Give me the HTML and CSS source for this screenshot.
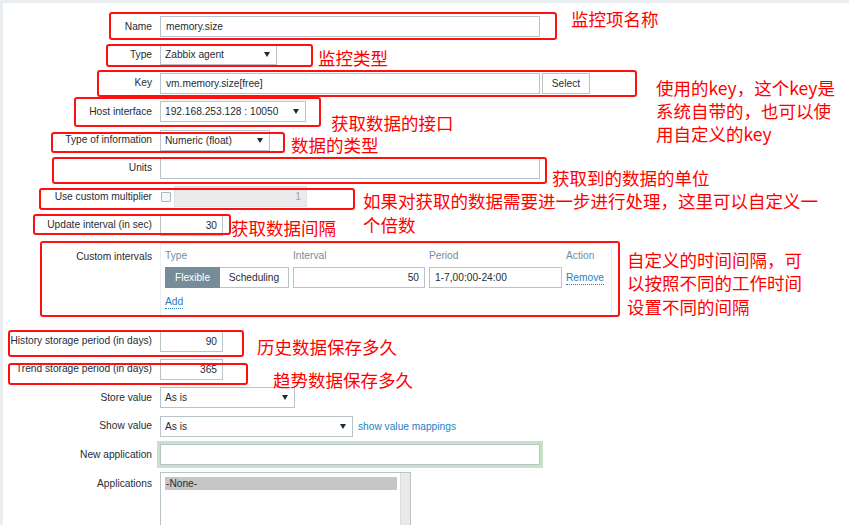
FILE: index.html
```html
<!DOCTYPE html>
<html lang="zh">
<head>
<meta charset="utf-8">
<title>Item</title>
<link rel="stylesheet" href="styles.css">
</head>
<body>
<div class="page">
  <div class="form">
    <div class="row">
      <div class="lbl">Name</div>
      <div class="ctl"><span class="field w380">memory.size</span></div>
    </div>
    <div class="row">
      <div class="lbl">Type</div>
      <div class="ctl"><span class="field select w117">Zabbix agent<i class="arrow"></i></span></div>
    </div>
    <div class="row">
      <div class="lbl">Key</div>
      <div class="ctl"><span class="field w380">vm.memory.size[free]</span><span class="btn">Select</span></div>
    </div>
    <div class="row">
      <div class="lbl">Host interface</div>
      <div class="ctl"><span class="field select w146">192.168.253.128 : 10050<i class="arrow"></i></span></div>
    </div>
    <div class="row">
      <div class="lbl">Type of information</div>
      <div class="ctl"><span class="field select w110">Numeric (float)<i class="arrow"></i></span></div>
    </div>
    <div class="row">
      <div class="lbl">Units</div>
      <div class="ctl"><span class="field w380"></span></div>
    </div>
    <div class="row">
      <div class="lbl">Use custom multiplier</div>
      <div class="ctl"><span class="check"></span><span class="field disabled num w133">1</span></div>
    </div>
    <div class="row">
      <div class="lbl">Update interval (in sec)</div>
      <div class="ctl"><span class="field num w63">30</span></div>
    </div>
    <div class="row row-tall">
      <div class="lbl lbl-top">Custom intervals</div>
      <div class="ctl">
        <div class="intervals">
          <div class="ih">Type</div>
          <div class="ih">Interval</div>
          <div class="ih">Period</div>
          <div class="ih">Action</div>
          <div class="seg"><span class="seg-on">Flexible</span><span class="seg-off">Scheduling</span></div>
          <span class="field num">50</span>
          <span class="field">1-7,00:00-24:00</span>
          <span class="act"><span class="link">Remove</span></span>
          <div class="add"><span class="link">Add</span></div>
        </div>
      </div>
    </div>
    <div class="row">
      <div class="lbl">History storage period (in days)</div>
      <div class="ctl"><span class="field num w63">90</span></div>
    </div>
    <div class="row">
      <div class="lbl">Trend storage period (in days)</div>
      <div class="ctl"><span class="field num w63">365</span></div>
    </div>
    <div class="row">
      <div class="lbl">Store value</div>
      <div class="ctl"><span class="field select w135">As is<i class="arrow"></i></span></div>
    </div>
    <div class="row">
      <div class="lbl">Show value</div>
      <div class="ctl"><span class="field select w193">As is<i class="arrow"></i></span><span class="link plain">show value mappings</span></div>
    </div>
    <div class="row">
      <div class="lbl">New application</div>
      <div class="ctl"><span class="field focus w380"></span></div>
    </div>
    <div class="row row-list">
      <div class="lbl lbl-top2">Applications</div>
      <div class="ctl">
        <div class="listbox">
          <div class="opts"><div class="opt-sel">-None-</div></div>
          <div class="track"></div>
        </div>
      </div>
    </div>
  </div>
</div>

<div class="overlay">
  <div class="box b1"></div>
  <div class="box b2"></div>
  <div class="box b3"></div>
  <div class="box b4"></div>
  <div class="box b5"></div>
  <div class="box b6"></div>
  <div class="box b7"></div>
  <div class="box b8"></div>
  <div class="box b9"></div>
  <div class="box b10"></div>
  <div class="box b11"></div>

  <div class="note n1">监控项名称</div>
  <div class="note n2">监控类型</div>
  <div class="note n3">使用的key，这个key是<br>系统自带的，也可以使<br>用自定义的key</div>
  <div class="note n4">获取数据的接口</div>
  <div class="note n5">数据的类型</div>
  <div class="note n6">获取到的数据的单位</div>
  <div class="note n7">如果对获取的数据需要进一步进行处理，这里可以自定义一<br>个倍数</div>
  <div class="note n8">获取数据间隔</div>
  <div class="note n9">自定义的时间间隔，可<br>以按照不同的工作时间<br>设置不同的间隔</div>
  <div class="note n10">历史数据保存多久</div>
  <div class="note n11">趋势数据保存多久</div>
</div>
</body>
</html>
```

FILE: styles.css
```css
html, body {
  margin: 0;
  padding: 0;
  height: 100%;
  overflow: hidden;
}
body {
  background: #ebeef0;
  font-family: "Liberation Sans", Arial, sans-serif;
  font-size: 10.2px;
  color: #1f2c33;
  position: relative;
}
.page {
  margin: 3px 0 0 3px;
  background: #ffffff;
  height: calc(100% - 3px);
  overflow: hidden;
}
.form {
  padding-top: 13px;
  display: flex;
  flex-direction: column;
  gap: 7.4px;
}
.row {
  display: flex;
  align-items: center;
  height: 21px;
  gap: 8px;
}
.row-tall { height: 80px; align-items: flex-start; }
.row-list { height: 48px; align-items: flex-start; }
.lbl {
  width: 149px;
  flex: none;
  text-align: right;
  line-height: 16px;
  white-space: nowrap;
}
.lbl-top { padding-top: 6px; }
.lbl-top2 { padding-top: 4px; }
.ctl {
  display: flex;
  align-items: center;
  height: 100%;
}
.row-tall .ctl,
.row-list .ctl { align-items: flex-start; }
.field {
  box-sizing: border-box;
  height: 21px;
  border: 1px solid #b8c4ca;
  background: #fff;
  padding: 0 5px;
  line-height: 19px;
  white-space: nowrap;
  position: relative;
  display: block;
}
.num { text-align: right; }
.w380 { width: 380px; }
.w117 { width: 117px; }
.w146 { width: 146px; }
.w110 { width: 110px; }
.w133 { width: 133px; }
.w63 { width: 63px; }
.w135 { width: 135px; }
.w193 { width: 193px; }
.select { padding-left: 4px; }
.arrow {
  position: absolute;
  right: 6px;
  top: 7px;
  width: 0;
  height: 0;
  border-left: 3.5px solid transparent;
  border-right: 3.5px solid transparent;
  border-top: 5px solid #1f2c33;
}
.btn {
  box-sizing: border-box;
  margin-left: 2px;
  width: 48px;
  height: 21px;
  border: 1px solid #b8c4ca;
  background: #fff;
  line-height: 19px;
  text-align: center;
}
.check {
  box-sizing: border-box;
  width: 10px;
  height: 10px;
  border: 1px solid #aab7be;
  border-radius: 1px;
  background: #f4f6f7;
  margin: 0 3px 0 1px;
}
.disabled {
  background: #ebebeb;
  border-color: #dfe3e5;
  color: #9aa6ac;
}
.intervals {
  box-sizing: border-box;
  width: 452px;
  height: 75px;
  border: 1px solid #ebeef0;
  padding: 4px 4px 0 4px;
  display: grid;
  grid-template-columns: 124px 132px 133px auto;
  grid-template-rows: 16px 21px 16px;
  column-gap: 4px;
  row-gap: 3px;
  align-items: center;
  align-content: start;
}
.ih {
  color: #768d99;
  line-height: 16px;
}
.seg {
  display: flex;
  height: 21px;
}
.seg span {
  box-sizing: border-box;
  height: 21px;
  line-height: 19px;
  text-align: center;
  border: 1px solid #b8c4ca;
}
.seg-on {
  width: 55px;
  background: #768d99;
  border-color: #768d99 !important;
  color: #fff;
}
.seg-off {
  width: 69px;
  background: #fff;
  border-left: none !important;
}
.act { line-height: 16px; }
.link {
  color: #1f7fc4;
  border-bottom: 1px dotted #1f7fc4;
  line-height: 13px;
  display: inline-block;
}
.plain {
  border-bottom: none;
  margin-left: 5px;
}
.add {
  grid-column: 1 / 2;
  padding-top: 6px;
  line-height: 16px;
}
.focus {
  box-shadow: 0 0 0 3px #c7e3c7;
}
.listbox {
  box-sizing: border-box;
  width: 251px;
  height: 100px;
  border: 1px solid #b8c4ca;
  display: flex;
}
.opts {
  flex: 1;
  padding: 4px 3px 0 4px;
}
.opt-sel {
  background: #c6c6c6;
  line-height: 13px;
  padding-left: 1px;
}
.track {
  width: 9px;
  background: #e9e9e9;
  border-left: 1px solid #dcdcdc;
}

/* annotation overlay */
.overlay {
  position: absolute;
  left: 0;
  top: 0;
  width: 100%;
  height: 100%;
  pointer-events: none;
}
.box {
  position: absolute;
  box-sizing: border-box;
  border: 2px solid #ff1010;
  border-radius: 3px;
}
.b1 { left: 109px; top: 12px; width: 448px; height: 28px; }
.b2 { left: 106px; top: 44px; width: 207px; height: 23px; }
.b3 { left: 97px; top: 70px; width: 540px; height: 27px; }
.b4 { left: 74px; top: 97px; width: 247px; height: 30px; }
.b5 { left: 51px; top: 132px; width: 234px; height: 21px; }
.b6 { left: 52px; top: 157px; width: 495px; height: 27px; }
.b7 { left: 39px; top: 188px; width: 316px; height: 22px; }
.b8 { left: 33px; top: 214px; width: 198px; height: 21px; }
.b9 { left: 40px; top: 241px; width: 580px; height: 76px; }
.b10 { left: 8px; top: 330px; width: 236px; height: 27px; }
.b11 { left: 8px; top: 363px; width: 240px; height: 22px; }

.note {
  position: absolute;
  color: #ff0000;
  font-family: "Noto Sans CJK SC", "Microsoft YaHei", sans-serif;
  font-size: 17.5px;
  line-height: 23px;
  white-space: nowrap;
}
.n1 { left: 571px; top: 6.5px; }
.n2 { left: 318px; top: 45.5px; }
.n3 { left: 656px; top: 75.5px; }
.n4 { left: 331px; top: 110.5px; }
.n5 { left: 291px; top: 132.5px; }
.n6 { left: 552px; top: 165.5px; }
.n7 { left: 363px; top: 189px; line-height: 24px; }
.n8 { left: 231px; top: 215.5px; }
.n9 { left: 627px; top: 247.5px; line-height: 23.5px; }
.n10 { left: 257px; top: 334.5px; }
.n11 { left: 273px; top: 367.5px; }
```
